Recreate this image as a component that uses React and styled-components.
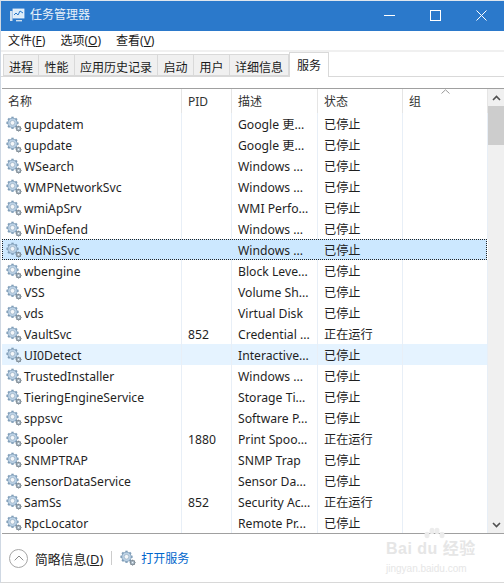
import React from "react";
import styled, { createGlobalStyle } from "styled-components";

const FONT = `"Noto Sans", "Noto Sans CJK SC", sans-serif`;

const Global = createGlobalStyle`
  html, body { margin: 0; padding: 0; background: #fff; }
  body { font-family: ${FONT}; font-size: 12.2px; color: #1a1a1a; }
  * { box-sizing: border-box; }
`;

const Win = styled.div`
  position: relative;
  width: 504px;
  height: 583px;
  overflow: hidden;
  background: #fff;
  border-left: 1px solid #cfd8e3;
  border-top: 1px solid #dfe6ee;
  border-bottom: 1px solid #d8d8d8;
  display: flex;
  flex-direction: column;
`;
const TitleBar = styled.div`
  height: 30px;
  flex: none;
  background: #2b79cb;
  display: flex;
  align-items: center;
  padding-left: 8px;
  color: #fff;
`;
const TitleText = styled.span`
  margin-left: 5px;
  font-size: 12px;
  line-height: 16px;
  margin-top: -3px;
  color: #e8f1fa;
`;
const WinButtons = styled.div`
  margin-left: auto;
  display: flex;
  height: 100%;
  padding-bottom: 2px;
`;
const WinButton = styled.div`
  width: 46px;
  display: flex;
  align-items: center;
  justify-content: center;
`;
const MenuBar = styled.div`
  height: 19px;
  flex: none;
  display: flex;
  align-items: center;
  gap: 15px;
  padding: 1px 0 0 7px;
`;
const MenuItem = styled.span`
  font-size: 12px;
  line-height: 18px;
  u { text-underline-offset: 1px; }
`;
const TabStrip = styled.div`
  flex: none;
  height: 27px;
  border-top: 2px solid #f0f0f0;
  display: flex;
  align-items: flex-end;
  padding-left: 2px;
  border-bottom: 1px solid #d9d9d9;
`;
const Tab = styled.div`
  width: ${(p) => p.$w}px;
  height: ${(p) => (p.$active ? 25 : 22)}px;
  margin-bottom: ${(p) => (p.$active ? -1 : 0)}px;
  background: ${(p) => (p.$active ? "#fff" : "#f0f0f0")};
  border: 1px solid #d9d9d9;
  border-left-width: ${(p) => (p.$first || p.$active ? 1 : 0)}px;
  border-bottom: ${(p) => (p.$active ? "0" : "1px solid #d9d9d9")};
  display: flex;
  align-items: center;
  justify-content: center;
  font-size: 12px;
  padding-top: ${(p) => (p.$active ? 0 : 3)}px;
  padding-bottom: 0;
`;
const TableFrame = styled.div`
  flex: none;
  margin-top: 11px;
  height: 446px;
  margin-left: 1px;
  border-top: 1px solid #a0a0a0;
  border-bottom: 1px solid #a0a0a0;
  display: flex;
  position: relative;
`;
const TableBody = styled.div`
  flex: 1;
  min-width: 0;
  display: flex;
  flex-direction: column;
`;
const GridRow = styled.div`
  display: grid;
  grid-template-columns: 180px 50px 86px 85px 85px;
  flex: none;
`;
const HeaderCell = styled.div`
  height: 24px;
  padding: 3px 0 0 6px;
  font-size: 12px;
  line-height: 20px;
  border-right: 1px solid #e5e5e5;
  color: #333;
  position: relative;
`;
const SortCaret = styled.svg`
  position: absolute;
  left: 38px;
  top: 0;
`;
const Row = styled(GridRow)`
  height: 21px;
  background: ${(p) => (p.$sel ? "#cce8ff" : p.$hover ? "#e5f3ff" : "transparent")};
  outline: ${(p) => (p.$sel ? "1px dotted #222" : "none")};
  outline-offset: -1px;
`;
const Cell = styled.div`
  height: 21px;
  line-height: 21px;
  padding: 1px 0 0 6px;
  font-size: 12.2px;
  white-space: nowrap;
  overflow: hidden;
  border-right: 1px solid ${(p) => (p.$sel ? "transparent" : "#e8eff7")};
  color: #1f1f1f;
`;
const NameCell = styled(Cell)`
  display: flex;
  align-items: center;
  padding: 0 0 0 4px;
  gap: 2px;
`;
const NameText = styled.span`
  margin-top: 2px;
`;
const Scrollbar = styled.div`
  width: 16px;
  flex: none;
  background: #f0f0f0;
  display: flex;
  flex-direction: column;
  margin-left: 1px;
`;
const ScrollBtn = styled.div`
  height: 17px;
  flex: none;
  display: flex;
  align-items: center;
  justify-content: center;
`;
const ScrollThumb = styled.div`
  height: 39px;
  flex: none;
  background: #cdcdcd;
`;
const ScrollFill = styled.div`
  flex: 1;
`;
const Footer = styled.div`
  flex: 1;
  display: flex;
  align-items: center;
  padding: 0 0 0 8px;
`;
const Collapse = styled.div`
  width: 19px;
  height: 19px;
  border: 1px solid #a6a6a6;
  border-radius: 50%;
  display: flex;
  align-items: center;
  justify-content: center;
  margin-right: 7px;
`;
const FooterLabel = styled.span`
  font-size: 12.8px;
  color: #222;
`;
const Divider = styled.div`
  width: 1px;
  height: 14px;
  background: #ccc;
  margin: 0 8px 0 8px;
`;
const OpenLink = styled.span`
  font-size: 12px;
  color: #0066cc;
  margin-left: 5px;
`;
const Watermark = styled.div`
  position: absolute;
  left: 385px;
  top: 526px;
  width: 110px;
  color: #e6e6e6;
  font-family: "Liberation Sans", "Noto Sans CJK SC", sans-serif;
`;
const WmMain = styled.div`
  font-size: 16px;
  font-weight: 700;
  line-height: 16px;
  margin-top: 14px;
  letter-spacing: 0.5px;
  white-space: nowrap;
`;
const WmSub = styled.div`
  font-size: 10px;
  line-height: 13px;
  margin-top: 5px;
  white-space: nowrap;
`;
const WmPaw = styled.svg`
  position: absolute;
  left: 36px;
  top: 0;
`;

const teeth = Array.from({ length: 8 }, (_, i) => i * 45);
function Gear({ cx, cy, r, fill, stroke }) {
  return (
    <g>
      {teeth.map((a) => (
        <rect key={a} x={cx - r * 0.24} y={cy - r * 1.3} width={r * 0.48} height={r * 0.6} fill={stroke} transform={`rotate(${a} ${cx} ${cy})`} />
      ))}
      <circle cx={cx} cy={cy} r={r} fill={fill} stroke={stroke} strokeWidth="0.8" />
      <circle cx={cx} cy={cy} r={r * 0.5} fill="#f4f7fa" stroke="#8fa6bb" strokeWidth="0.6" />
    </g>
  );
}
function ServiceIcon({ size = 16 }) {
  return (
    <svg width={size} height={size} viewBox="0 0 16 16" style={{ flex: "none" }}>
      <Gear cx={6.5} cy={6.8} r={4.7} fill="#bcd2e6" stroke="#7f9db8" />
      <Gear cx={12.6} cy={12.6} r={2.2} fill="#aeb9c3" stroke="#74808a" />
    </svg>
  );
}
function AppIcon() {
  return (
    <svg width="16" height="16" viewBox="0 0 16 16" style={{ flex: "none", marginTop: -2 }}>
      <rect x="1" y="4" width="2.5" height="10" fill="#cfe0ef" />
      <rect x="4" y="2" width="11" height="9" fill="#dcecf8" stroke="#eef6fc" strokeWidth="0.8" />
      <path d="M5 8 L7 6 L9 8 L11 4 L14 6" fill="none" stroke="#2b79cb" strokeWidth="1" />
      <path d="M7 13h6v1.4H7z" fill="#cfe0ef" />
    </svg>
  );
}

const rows = [
  ["gupdatem", "", "Google 更...", "已停止"],
  ["gupdate", "", "Google 更...", "已停止"],
  ["WSearch", "", "Windows ...", "已停止"],
  ["WMPNetworkSvc", "", "Windows ...", "已停止"],
  ["wmiApSrv", "", "WMI Perfo...", "已停止"],
  ["WinDefend", "", "Windows ...", "已停止"],
  ["WdNisSvc", "", "Windows ...", "已停止"],
  ["wbengine", "", "Block Leve...", "已停止"],
  ["VSS", "", "Volume Sh...", "已停止"],
  ["vds", "", "Virtual Disk", "已停止"],
  ["VaultSvc", "852", "Credential ...", "正在运行"],
  ["UI0Detect", "", "Interactive...", "已停止"],
  ["TrustedInstaller", "", "Windows ...", "已停止"],
  ["TieringEngineService", "", "Storage Ti...", "已停止"],
  ["sppsvc", "", "Software P...", "已停止"],
  ["Spooler", "1880", "Print Spoo...", "正在运行"],
  ["SNMPTRAP", "", "SNMP Trap", "已停止"],
  ["SensorDataService", "", "Sensor Da...", "已停止"],
  ["SamSs", "852", "Security Ac...", "正在运行"],
  ["RpcLocator", "", "Remote Pr...", "已停止"],
];

const tabs = [["进程", 36], ["性能", 36], ["应用历史记录", 83], ["启动", 36], ["用户", 36], ["详细信息", 59]];

export default function App() {
  return (
    <Win>
      <Global />
      <TitleBar>
        <AppIcon />
        <TitleText>任务管理器</TitleText>
        <WinButtons>
          <WinButton>
            <svg width="11" height="11" viewBox="0 0 11 11"><path d="M0 5.5h11" stroke="#fff" /></svg>
          </WinButton>
          <WinButton>
            <svg width="11" height="11" viewBox="0 0 11 11"><rect x="0.5" y="0.5" width="10" height="10" fill="none" stroke="#fff" /></svg>
          </WinButton>
          <WinButton>
            <svg width="11" height="11" viewBox="0 0 11 11"><path d="M0.5 0.5l10 10M10.5 0.5l-10 10" stroke="#fff" /></svg>
          </WinButton>
        </WinButtons>
      </TitleBar>
      <MenuBar>
        <MenuItem>文件(<u>F</u>)</MenuItem>
        <MenuItem>选项(<u>O</u>)</MenuItem>
        <MenuItem>查看(<u>V</u>)</MenuItem>
      </MenuBar>
      <TabStrip>
        {tabs.map(([t, w], i) => (
          <Tab key={t} $w={w} $first={i === 0}>{t}</Tab>
        ))}
        <Tab $w={40} $active>服务</Tab>
      </TabStrip>
      <TableFrame>
        <TableBody>
          <GridRow>
            <HeaderCell>名称</HeaderCell>
            <HeaderCell>PID</HeaderCell>
            <HeaderCell>描述</HeaderCell>
            <HeaderCell>状态</HeaderCell>
            <HeaderCell>
              组
              <SortCaret width="9" height="5" viewBox="0 0 9 5">
                <path d="M0.5 4.5L4.5 0.8L8.5 4.5" fill="none" stroke="#9a9a9a" />
              </SortCaret>
            </HeaderCell>
          </GridRow>
          {rows.map((r, i) => (
            <Row key={r[0]} $sel={i === 6} $hover={i === 11}>
              <NameCell $sel={i === 6}>
                <ServiceIcon />
                <NameText>{r[0]}</NameText>
              </NameCell>
              <Cell $sel={i === 6}>{r[1]}</Cell>
              <Cell $sel={i === 6}>{r[2]}</Cell>
              <Cell $sel={i === 6}>{r[3]}</Cell>
              <Cell $sel={i === 6} />
            </Row>
          ))}
        </TableBody>
        <Scrollbar>
          <ScrollBtn>
            <svg width="9" height="6" viewBox="0 0 9 6"><path d="M1 5L4.5 1.5L8 5" fill="none" stroke="#505050" strokeWidth="1.6" /></svg>
          </ScrollBtn>
          <ScrollThumb />
          <ScrollFill />
          <ScrollBtn>
            <svg width="9" height="6" viewBox="0 0 9 6"><path d="M1 1L4.5 4.5L8 1" fill="none" stroke="#505050" strokeWidth="1.6" /></svg>
          </ScrollBtn>
        </Scrollbar>
      </TableFrame>
      <Footer>
        <Collapse>
          <svg width="10" height="6" viewBox="0 0 10 6"><path d="M0.7 5.3L5 1L9.3 5.3" fill="none" stroke="#8a8a8a" /></svg>
        </Collapse>
        <FooterLabel>简略信息(<u>D</u>)</FooterLabel>
        <Divider />
        <ServiceIcon />
        <OpenLink>打开服务</OpenLink>
      </Footer>
      <Watermark>
        <WmPaw width="24" height="18" viewBox="0 0 24 18">
          <g fill="#ececec">
            <ellipse cx="5" cy="8" rx="2.5" ry="3.2" />
            <ellipse cx="10" cy="4" rx="2.5" ry="3.2" />
            <ellipse cx="15" cy="4" rx="2.5" ry="3.2" />
            <ellipse cx="20" cy="8" rx="2.5" ry="3.2" />
          </g>
        </WmPaw>
        <WmMain>Bai du 经验</WmMain>
        <WmSub>jingyan.baidu.com</WmSub>
      </Watermark>
    </Win>
  );
}
